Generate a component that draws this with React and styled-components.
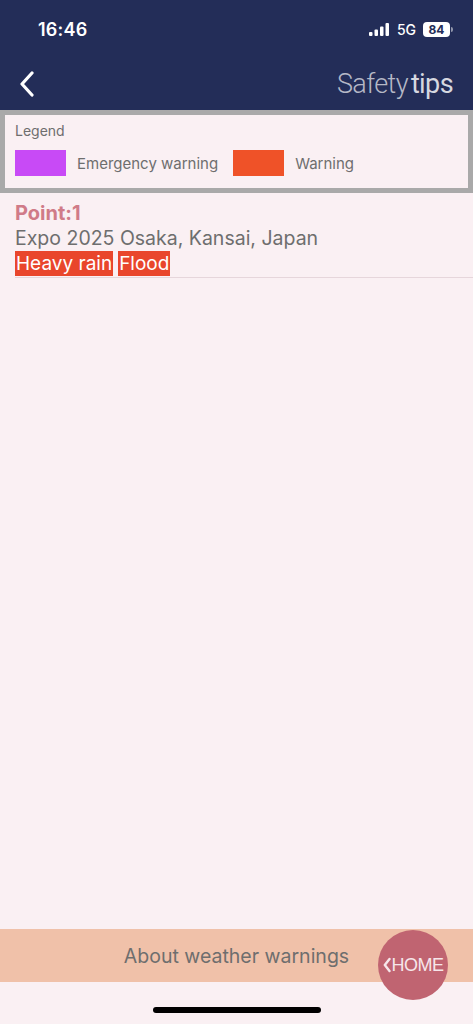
import React from "react";
import styled, { createGlobalStyle } from "styled-components";

const GlobalStyle = createGlobalStyle`
  html, body {
    margin: 0;
    padding: 0;
    background: #faf0f3;
  }
  #root {
    min-height: 100vh;
  }
`

const Page = styled.div`
  width: 100%;
  height: 1024px;
  display: flex;
  flex-direction: column;
  background-color: #faf0f3;
  font-family: "Inter", "Liberation Sans", sans-serif;
  overflow: hidden;
`

const TopBar = styled.div`
  background-color: #232d58;
  height: 110px;
  display: flex;
  flex-direction: column;
`

const StatusBar = styled.div`
  height: 58px;
  display: flex;
  align-items: center;
  justify-content: space-between;
  padding: 0 20px 0 38px;
  box-sizing: border-box;
`

const Clock = styled.span`
  font-family: "Inter", sans-serif;
  font-weight: 600;
  font-size: 18px;
  color: white;
  letter-spacing: 0.2px;
`

const StatusIcons = styled.div`
  display: flex;
  align-items: center;
  gap: 7px;
`

const NetLabel = styled.span`
  font-family: "Inter", sans-serif;
  font-size: 14px;
  font-weight: 500;
  color: white;
`

const Battery = styled.div`
  display: flex;
  align-items: center;
  gap: 1px;
`

const BatteryBody = styled.div`
  width: 27px;
  height: 15px;
  border-radius: 4px;
  background: white;
  color: #232d58;
  font-family: "Inter", sans-serif;
  font-weight: 700;
  font-size: 12px;
  display: flex;
  align-items: center;
  justify-content: center;
`

const BatteryNub = styled.div`
  width: 2px;
  height: 5px;
  border-radius: 0 2px 2px 0;
  background: rgba(255, 255, 255, 0.5);
`

const NavBar = styled.div`
  flex: 1;
  display: flex;
  align-items: center;
  justify-content: space-between;
  padding: 0 20px 0 18px;
`

const BackButton = styled.div`
  display: flex;
  align-items: center;
  cursor: pointer;
`

const Brand = styled.div`
  font-family: "Roboto", "Liberation Sans", sans-serif;
  font-size: 27px;
  color: #d6d8e0;
  letter-spacing: -0.6px;
  .light {
    font-weight: 300;
    color: #b5b8c6;
    margin-right: 3px;
  }
  .bold {
    font-weight: 400;
  }
`

const Legend = styled.div`
  border: 5px solid #a9a9a9;
  background-color: #faf0f3;
  padding: 7px 10px 12px 10px;
  display: flex;
  flex-direction: column;
  gap: 11px;
`

const LegendTitle = styled.div`
  font-size: 14px;
  line-height: 17px;
  color: #6e6e6e;
`

const LegendRow = styled.div`
  display: flex;
  align-items: center;
`

const Swatch = styled.div`
  width: 51px;
  height: 26px;
  background-color: ${props => props.color};
  margin-right: 11px;
`

const LegendLabel = styled.span`
  font-size: 15px;
  color: #6e6e6e;
  margin-right: 15px;
`

const PointItem = styled.div`
  margin-left: 15px;
  padding: 8px 0 1px 0;
  border-bottom: 1px solid #e6d6db;
  display: flex;
  flex-direction: column;
`

const PointTitle = styled.div`
  font-size: 20px;
  font-weight: 700;
  color: #d07b88;
  line-height: 24px;
`

const Address = styled.div`
  font-size: 19.5px;
  color: #6e6e6e;
  line-height: 26px;
`

const Tags = styled.div`
  display: flex;
  gap: 5px;
`

const Tag = styled.span`
  background-color: ${props => props.color};
  color: white;
  font-size: 19px;
  line-height: 25px;
  padding: 0 1px;
`

const Content = styled.div`
  flex: 1;
`

const BottomArea = styled.div`
  position: relative;
  height: 95px;
  display: flex;
  flex-direction: column;
`

const AboutBar = styled.div`
  height: 53px;
  background-color: #f0c1a9;
  display: flex;
  align-items: center;
  justify-content: center;
  font-size: 19.5px;
  color: #6e6e6e;
`

const HomeButton = styled.div`
  position: absolute;
  left: 378px;
  top: 1px;
  width: 70px;
  height: 70px;
  border-radius: 50%;
  background-color: #c06471;
  color: #f6e6ea;
  display: flex;
  align-items: center;
  justify-content: center;
  font-family: "Liberation Sans", Arial, sans-serif;
  font-size: 18px;
  letter-spacing: -0.5px;
  gap: 1px;
`

const IndicatorRow = styled.div`
  flex: 1;
  display: flex;
  justify-content: center;
  align-items: flex-start;
  padding-top: 25px;
`

const HomeIndicator = styled.div`
  width: 168px;
  height: 6px;
  border-radius: 3px;
  background: #000;
`

const SignalIcon = () => (
  <svg width="21" height="13" viewBox="0 0 21 13">
    <rect x="0" y="9" width="3.5" height="4" rx="1" fill="white" />
    <rect x="5.5" y="6.5" width="3.5" height="6.5" rx="1" fill="white" />
    <rect x="11" y="3.5" width="3.5" height="9.5" rx="1" fill="white" />
    <rect x="16.5" y="0" width="3.5" height="13" rx="1" fill="white" />
  </svg>
)

const BackChevron = () => (
  <svg width="20" height="26" viewBox="0 0 20 26">
    <path d="M14 2 L4 13 L14 24" stroke="white" strokeWidth="3.2" fill="none" strokeLinecap="round" strokeLinejoin="round" />
  </svg>
)

const SmallChevron = () => (
  <svg width="8" height="16" viewBox="0 0 8 16">
    <path d="M6.5 2 L1.8 8 L6.5 14" stroke="#f6e6ea" strokeWidth="2.4" fill="none" strokeLinecap="round" strokeLinejoin="round" />
  </svg>
)

export default function App() {
  return (
    <Page>
      <GlobalStyle />
      <TopBar>
        <StatusBar>
          <Clock>16:46</Clock>
          <StatusIcons>
            <SignalIcon />
            <NetLabel>5G</NetLabel>
            <Battery>
              <BatteryBody>84</BatteryBody>
              <BatteryNub />
            </Battery>
          </StatusIcons>
        </StatusBar>
        <NavBar>
          <BackButton><BackChevron /></BackButton>
          <Brand><span className="light">Safety</span><span className="bold">tips</span></Brand>
        </NavBar>
      </TopBar>

      <Legend>
        <LegendTitle>Legend</LegendTitle>
        <LegendRow>
          <Swatch color="#c84af6" />
          <LegendLabel>Emergency warning</LegendLabel>
          <Swatch color="#ef5228" />
          <LegendLabel>Warning</LegendLabel>
        </LegendRow>
      </Legend>

      <Content>
        <PointItem>
          <PointTitle>Point:1</PointTitle>
          <Address>Expo 2025 Osaka, Kansai, Japan</Address>
          <Tags>
            <Tag color="#e9462c">Heavy rain</Tag>
            <Tag color="#e9462c">Flood</Tag>
          </Tags>
        </PointItem>
      </Content>

      <BottomArea>
        <AboutBar>About weather warnings</AboutBar>
        <HomeButton><SmallChevron />HOME</HomeButton>
        <IndicatorRow><HomeIndicator /></IndicatorRow>
      </BottomArea>
    </Page>
  );
}
